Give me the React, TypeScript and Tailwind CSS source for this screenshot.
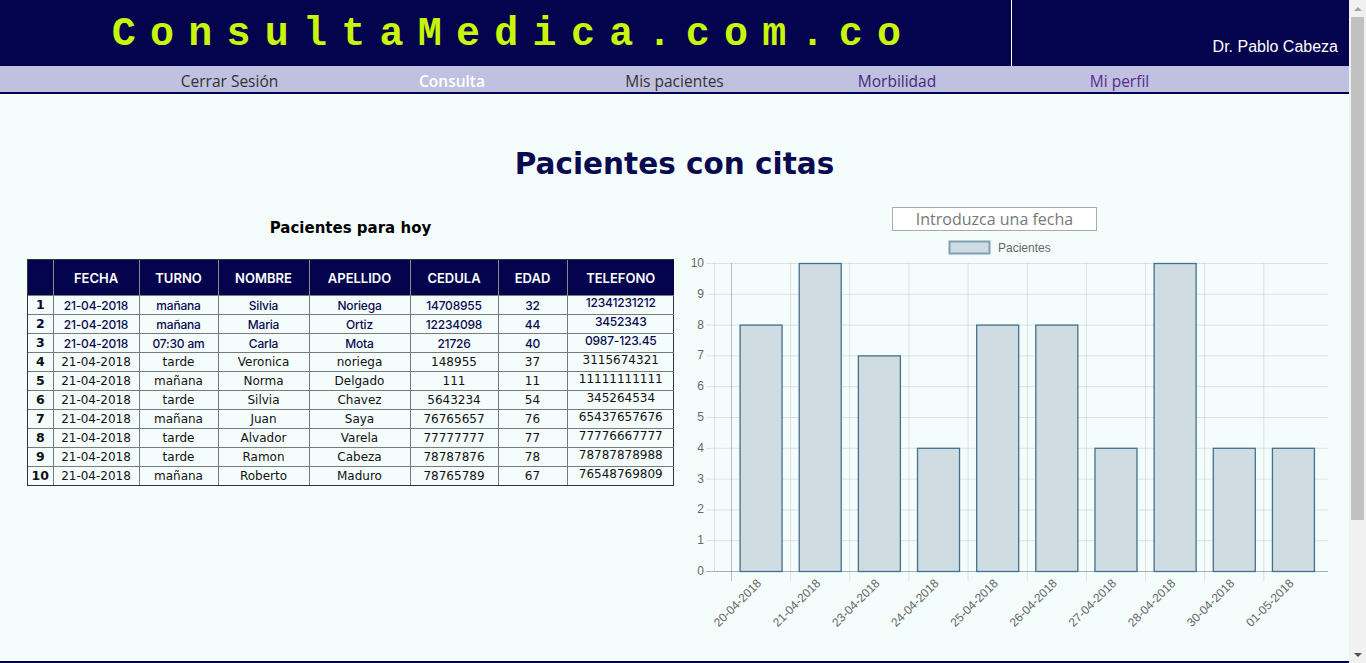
import React from "react";

const cols = [
  { label: "", w: "w-[25px]" },
  { label: "FECHA", w: "w-[86px]" },
  { label: "TURNO", w: "w-[79px]" },
  { label: "NOMBRE", w: "w-[91px]" },
  { label: "APELLIDO", w: "w-[101px]" },
  { label: "CEDULA", w: "w-[88px]" },
  { label: "EDAD", w: "w-[69px]" },
  { label: "TELEFONO", w: "w-[107px]" },
];

const rows = [
  ["21-04-2018", "mañana", "Silvia", "Noriega", "14708955", "32", "12341231212"],
  ["21-04-2018", "mañana", "Maria", "Ortiz", "12234098", "44", "3452343"],
  ["21-04-2018", "07:30 am", "Carla", "Mota", "21726", "40", "0987-123.45"],
  ["21-04-2018", "tarde", "Veronica", "noriega", "148955", "37", "3115674321"],
  ["21-04-2018", "mañana", "Norma", "Delgado", "111", "11", "11111111111"],
  ["21-04-2018", "tarde", "Silvia", "Chavez", "5643234", "54", "345264534"],
  ["21-04-2018", "mañana", "Juan", "Saya", "76765657", "76", "65437657676"],
  ["21-04-2018", "tarde", "Alvador", "Varela", "77777777", "77", "77776667777"],
  ["21-04-2018", "tarde", "Ramon", "Cabeza", "78787876", "78", "78787878988"],
  ["21-04-2018", "mañana", "Roberto", "Maduro", "78765789", "67", "76548769809"],
];

const navItems = [
  { label: "Cerrar Sesión", cls: "text-[#333]" },
  { label: "Consulta", cls: "text-white font-semibold" },
  { label: "Mis pacientes", cls: "text-[#333]" },
  { label: "Morbilidad", cls: "text-[#47287a]" },
  { label: "Mi perfil", cls: "text-[#5a2a8c]" },
];

const chartData = [
  { date: "20-04-2018", v: 8 },
  { date: "21-04-2018", v: 10 },
  { date: "23-04-2018", v: 7 },
  { date: "24-04-2018", v: 4 },
  { date: "25-04-2018", v: 8 },
  { date: "26-04-2018", v: 8 },
  { date: "27-04-2018", v: 4 },
  { date: "28-04-2018", v: 10 },
  { date: "30-04-2018", v: 4 },
  { date: "01-05-2018", v: 4 },
];

function BarChart() {
  const x0 = 51.5;
  const cw = 59.15;
  const y0 = 336;
  const unit = 30.8;
  const ticks = [0, 1, 2, 3, 4, 5, 6, 7, 8, 9, 10];

  return (
    <svg width="669" height="426" viewBox="0 0 669 426" fontFamily="'Liberation Sans', Arial, sans-serif">
      {/* legend */}
      <rect x="269.5" y="6.5" width="40" height="12" fill="#cfdde2" stroke="#7f9fb6" strokeWidth="2" />
      <text x="318" y="17" fontSize="12" fill="#666">
        Pacientes
      </text>

      {/* grid */}
      {ticks.map((t) => (
        <line
          key={t}
          x1="26"
          x2="648"
          y1={y0 - t * unit + 0.5}
          y2={y0 - t * unit + 0.5}
          stroke={t === 0 ? "rgba(0,0,0,0.3)" : "rgba(0,0,0,0.1)"}
        />
      ))}
      <line x1="34.5" x2="34.5" y1={y0 - 10 * unit} y2={y0} stroke="rgba(0,0,0,0.1)" />
      {chartData.map((d, i) => (
        <line
          key={d.date}
          x1={x0 + i * cw}
          x2={x0 + i * cw}
          y1={y0 - 10 * unit}
          y2={y0 + 10}
          stroke={i === 0 ? "rgba(0,0,0,0.25)" : "rgba(0,0,0,0.1)"}
        />
      ))}

      {/* y labels */}
      {ticks.map((t) => (
        <text key={t} x="24" y={y0 - t * unit + 4} fontSize="12" fill="#666" textAnchor="end">
          {t}
        </text>
      ))}

      {/* bars */}
      {chartData.map((d, i) => {
        const cx = x0 + (i + 0.5) * cw;
        const h = d.v * unit;
        return (
          <rect
            key={d.date}
            x={cx - 21}
            y={y0 - h + 0.5}
            width="42"
            height={h}
            fill="#cfdde2"
            stroke="#44708f"
            strokeWidth="1.3"
          />
        );
      })}

      {/* x labels */}
      {chartData.map((d, i) => {
        const cx = x0 + (i + 0.5) * cw;
        return (
          <text
            key={d.date}
            transform={`translate(${cx + 1} ${y0 + 13}) rotate(-45)`}
            fontSize="12"
            fill="#666"
            textAnchor="end"
          >
            {d.date}
          </text>
        );
      })}
    </svg>
  );
}

function ScrollBar() {
  return (
    <div className="w-[17px] h-[663px] bg-[#f1f1f1] flex flex-col items-center">
      <div className="h-[17px] flex items-center justify-center">
        <div className="w-0 h-0 border-l-[4px] border-r-[4px] border-b-[4px] border-l-transparent border-r-transparent border-b-[#a3a3a3]" />
      </div>
      <div className="w-[13px] h-[503px] bg-[#c1c1c1]" />
      <div className="flex-1" />
      <div className="h-[17px] flex items-center justify-center">
        <div className="w-0 h-0 border-l-[4px] border-r-[4px] border-t-[4px] border-l-transparent border-r-transparent border-t-[#505050]" />
      </div>
    </div>
  );
}

export default function App() {
  return (
    <div className="flex h-[663px] overflow-hidden">
      <div className="w-[1349px] h-[663px] overflow-hidden bg-[#f4fdfc] flex flex-col">
        <header className="flex h-[66px] shrink-0 bg-[#03034e]">
          <div className="w-[1011px] flex items-center justify-center pl-[16px] pt-[4px]">
            <h1 className="font-['Liberation_Mono',monospace] font-bold text-[40px] tracking-[14.25px] text-[#c9f50a] leading-none">
              ConsultaMedica.com.co
            </h1>
          </div>
          <div className="flex-1 border-l border-white flex items-end justify-end pr-[11px] pb-[7px]">
            <span className="font-['Liberation_Sans',sans-serif] text-[16px] text-white">Dr. Pablo Cabeza</span>
          </div>
        </header>

        <nav className="h-[28px] shrink-0 bg-[#c0c0e0] border-b-2 border-[#03034e] flex justify-center">
          {navItems.map((n) => (
            <a
              key={n.label}
              className={`w-[222.5px] text-center font-['Open_Sans',sans-serif] text-[15.5px] leading-[31px] ${n.cls}`}
            >
              {n.label}
            </a>
          ))}
        </nav>

        <main className="h-[567px] shrink-0 pt-[52px]">
          <h2 className="text-center font-['DejaVu_Sans',Verdana,sans-serif] font-bold text-[29.5px] leading-[36px] text-[#0a0a50] mb-[23px]">
            Pacientes con citas
          </h2>

          <div className="flex">
            <section className="w-[680px] pl-[27px] pr-[6px]">
              <h3 className="mt-[13px] mb-[21px] text-center font-['DejaVu_Sans',Verdana,sans-serif] font-bold text-[15px] leading-[20px] text-black">
                Pacientes para hoy
              </h3>
              <div className="w-[647px] border border-[#333]">
                <table className="w-full border-collapse table-fixed">
                  <thead>
                    <tr className="h-[35px] bg-[#03034e]">
                      {cols.map((c, i) => (
                        <th
                          key={i}
                          className={`${c.w} ${i > 0 ? "border-l border-[#8a8a8a]" : ""} p-0 text-white font-['Inter',sans-serif] font-semibold text-[13px] text-center pt-[2px]`}
                        >
                          {c.label}
                        </th>
                      ))}
                    </tr>
                  </thead>
                  <tbody>
                    {rows.map((r, ri) => {
                      const modern = ri < 3;
                      return (
                        <tr key={ri}>
                          <td
                            className={`h-[18px] p-0 border-t border-[#7a7a7a] text-center font-['DejaVu_Sans',Verdana,sans-serif] font-bold text-[12.5px] leading-[17px] ${
                              modern ? "text-[#0a0a30]" : "text-[#111]"
                            }`}
                          >
                            {ri + 1}
                          </td>
                          {r.map((cell, ci) => (
                            <td
                              key={ci}
                              className={`h-[18px] p-0 border-t border-l border-[#7a7a7a] text-center text-[12px] ${
                                ci === 6 ? "leading-[14px] align-top" : "leading-[17px] pt-[1px]"
                              } ${
                                modern
                                  ? "font-['Inter',sans-serif] font-medium text-[#0a0a50] tracking-[-0.2px]"
                                  : "font-['DejaVu_Sans',Verdana,sans-serif] text-[#111]"
                              }`}
                            >
                              {cell}
                            </td>
                          ))}
                        </tr>
                      );
                    })}
                  </tbody>
                </table>
              </div>
            </section>

            <section className="flex-1 flex flex-col">
              <input
                type="text"
                placeholder="Introduzca una fecha"
                className="ml-[212px] mt-[2px] w-[205px] h-[24px] border border-[#a9a9a9] bg-white text-center font-['Open_Sans',sans-serif] text-[16px] placeholder:text-[#777] outline-none"
              />
              <div className="mt-[4px]">
                <BarChart />
              </div>
            </section>
          </div>
        </main>

        <footer className="h-[169px] shrink-0 bg-[#03034e]" />
      </div>
      <ScrollBar />
    </div>
  );
}
